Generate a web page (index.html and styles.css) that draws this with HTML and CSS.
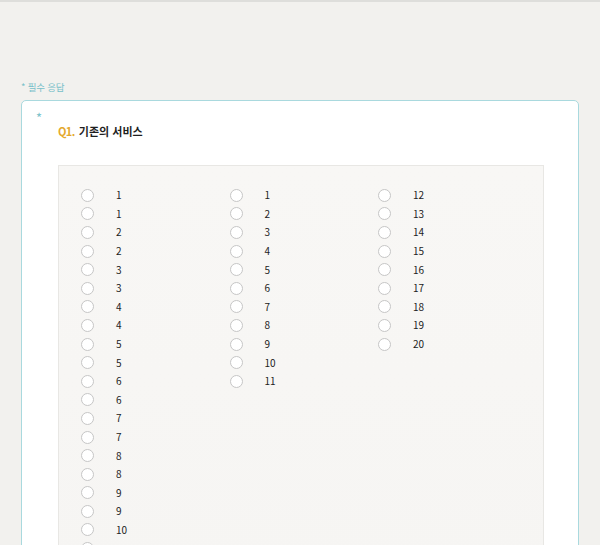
FILE: index.html
```html
<!DOCTYPE html>
<html lang="ko">
<head>
<meta charset="utf-8">
<link rel="stylesheet" href="styles.css">
</head>
<body>
<div class="topline"></div>
<div class="page">
  <div class="required">* 필수 응답</div>
  <div class="card">
    <div class="star">*</div>
    <div class="title"><span class="qnum">Q1.</span> 기존의 서비스</div>
    <div class="box">
      <div class="col">
        <div class="opt"><span class="radio"></span><span class="lbl">1</span></div>
        <div class="opt"><span class="radio"></span><span class="lbl">1</span></div>
        <div class="opt"><span class="radio"></span><span class="lbl">2</span></div>
        <div class="opt"><span class="radio"></span><span class="lbl">2</span></div>
        <div class="opt"><span class="radio"></span><span class="lbl">3</span></div>
        <div class="opt"><span class="radio"></span><span class="lbl">3</span></div>
        <div class="opt"><span class="radio"></span><span class="lbl">4</span></div>
        <div class="opt"><span class="radio"></span><span class="lbl">4</span></div>
        <div class="opt"><span class="radio"></span><span class="lbl">5</span></div>
        <div class="opt"><span class="radio"></span><span class="lbl">5</span></div>
        <div class="opt"><span class="radio"></span><span class="lbl">6</span></div>
        <div class="opt"><span class="radio"></span><span class="lbl">6</span></div>
        <div class="opt"><span class="radio"></span><span class="lbl">7</span></div>
        <div class="opt"><span class="radio"></span><span class="lbl">7</span></div>
        <div class="opt"><span class="radio"></span><span class="lbl">8</span></div>
        <div class="opt"><span class="radio"></span><span class="lbl">8</span></div>
        <div class="opt"><span class="radio"></span><span class="lbl">9</span></div>
        <div class="opt"><span class="radio"></span><span class="lbl">9</span></div>
        <div class="opt"><span class="radio"></span><span class="lbl">10</span></div>
        <div class="opt"><span class="radio"></span><span class="lbl">10</span></div>
      </div>
      <div class="col">
        <div class="opt"><span class="radio"></span><span class="lbl">1</span></div>
        <div class="opt"><span class="radio"></span><span class="lbl">2</span></div>
        <div class="opt"><span class="radio"></span><span class="lbl">3</span></div>
        <div class="opt"><span class="radio"></span><span class="lbl">4</span></div>
        <div class="opt"><span class="radio"></span><span class="lbl">5</span></div>
        <div class="opt"><span class="radio"></span><span class="lbl">6</span></div>
        <div class="opt"><span class="radio"></span><span class="lbl">7</span></div>
        <div class="opt"><span class="radio"></span><span class="lbl">8</span></div>
        <div class="opt"><span class="radio"></span><span class="lbl">9</span></div>
        <div class="opt"><span class="radio"></span><span class="lbl">10</span></div>
        <div class="opt"><span class="radio"></span><span class="lbl">11</span></div>
      </div>
      <div class="col">
        <div class="opt"><span class="radio"></span><span class="lbl">12</span></div>
        <div class="opt"><span class="radio"></span><span class="lbl">13</span></div>
        <div class="opt"><span class="radio"></span><span class="lbl">14</span></div>
        <div class="opt"><span class="radio"></span><span class="lbl">15</span></div>
        <div class="opt"><span class="radio"></span><span class="lbl">16</span></div>
        <div class="opt"><span class="radio"></span><span class="lbl">17</span></div>
        <div class="opt"><span class="radio"></span><span class="lbl">18</span></div>
        <div class="opt"><span class="radio"></span><span class="lbl">19</span></div>
        <div class="opt"><span class="radio"></span><span class="lbl">20</span></div>
      </div>
    </div>
  </div>
</div>
</body>
</html>
```

FILE: styles.css
```css
html, body {
  margin: 0;
  padding: 0;
}
body {
  background: #f2f1ee;
  font-family: "Noto Sans CJK KR", "Noto Sans", sans-serif;
  color: #222;
  height: 545px;
  overflow: hidden;
}
.topline {
  height: 2px;
  background: #dededb;
}
.page {
  padding: 0 21px 0 21px;
}
.required {
  margin-top: 78px;
  height: 14px;
  line-height: 14px;
  font-size: 9.5px;
  color: #78c0c9;
  padding-left: 0;
  letter-spacing: -0.2px;
}
.card {
  margin-top: 6px;
  background: #fff;
  border: 1px solid #a9d9de;
  border-radius: 5px;
  padding: 8px 34px 0 36px;
  height: 600px;
}
.star {
  font-size: 13px;
  line-height: 12px;
  height: 12px;
  padding-top: 3px;
  color: #7dc3cb;
  margin-left: -22px;
}
.title {
  font-size: 11px;
  font-weight: bold;
  line-height: 16px;
  color: #1f1f1f;
  margin-top: -1px;
}
.qnum {
  color: #e4a92e;
  letter-spacing: -0.6px;
  margin-right: 1px;
}
.box {
  margin-top: 26px;
  background: linear-gradient(#f8f7f5, #f5f4f2);
  border: 1px solid #e8e7e4;
  padding: 20px 0 0 22px;
  display: flex;
  align-items: flex-start;
  height: 600px;
}
.col {
  width: 148.5px;
  display: flex;
  flex-direction: column;
}
.opt {
  height: 18.6px;
  display: flex;
  align-items: center;
}
.radio {
  width: 13px;
  height: 13px;
  box-sizing: border-box;
  border: 1px solid #c6c6c6;
  border-radius: 50%;
  background: #fff;
  flex: none;
}
.lbl {
  margin-left: 22px;
  font-size: 10px;
  color: #222;
  line-height: 12px;
}
```
